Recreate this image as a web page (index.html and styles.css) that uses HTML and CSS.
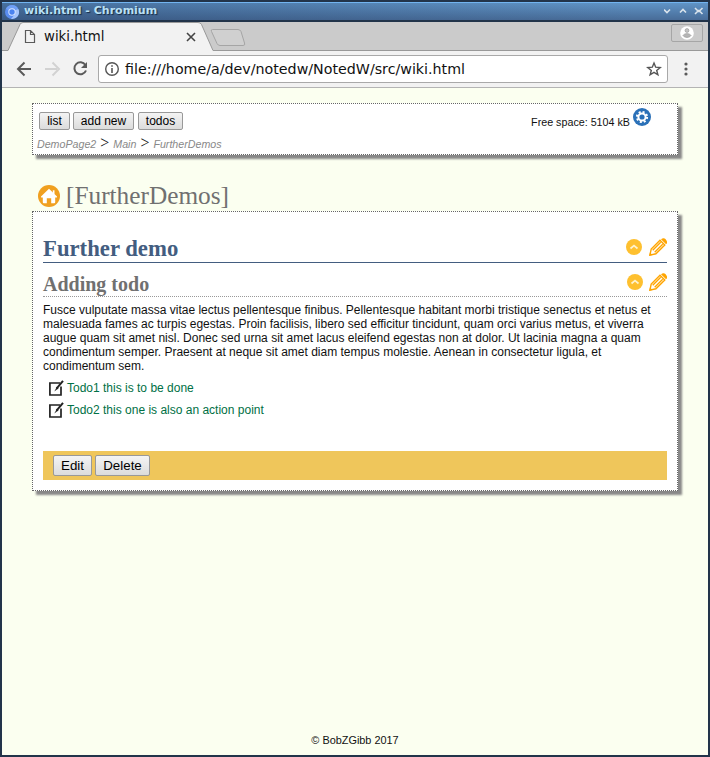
FILE: index.html
```html
<!DOCTYPE html>
<html lang="en">
<head>
<meta charset="utf-8">
<title>wiki.html</title>
<link rel="stylesheet" href="styles.css">
</head>
<body>
<div class="window">
  <header class="titlebar">
    <svg class="logo" width="16" height="16" viewBox="0 0 16 16"><circle cx="8" cy="8" r="7" fill="#5a8df0"/><path d="M8 1a7 7 0 0 1 6.300 4H8a3 3 0 0 0-3 2L2 4.500A7 7 0 0 1 8 1z" fill="#6f9ff5"/><path d="M14.300 5A7 7 0 0 1 7 15l4-5V6z" fill="#a6c5fa"/><circle cx="8" cy="8" r="3.700" fill="#d5e4ff"/><circle cx="8" cy="8" r="2.700" fill="#4b83ee"/></svg>
    <span class="caption">wiki.html - Chromium</span>
    <svg class="controls" width="40" height="10" viewBox="0 0 40 10" fill="none" stroke="#d9e3ec" stroke-width="1.600"><path d="M0 3.500l3 3 3-3M16 6.500l3-3 3 3M31 2l2.500 2.500h2.500l2.500-2.500M31 8l2.500-2.500h2.500l2.500 2.500"/></svg>
  </header>
  <div class="tabs">
    <svg class="tab-shapes" width="706" height="30" viewBox="0 0 706 30"><path d="M0 28.500H6L18 2.500Q19 .5 21 .5H196Q198.500.5 199.500 2.500L211 28.500H706V30H0z" fill="#f2f2f2"/><path d="M0 28.500H6L18 2.500Q19 .5 21 .5H196Q198.500.5 199.500 2.500L211 28.500H706" fill="none" stroke="#999"/><path d="M210.500 7.500H236Q238 7.500 239 9.500L242.500 21Q243.500 23.500 241 23.500H218Q216 23.500 215 21.500L209.500 9.500Q208.500 7.500 210.500 7.500z" fill="#d0d0d0" stroke="#a5a5a5"/></svg>
    <svg class="doc" width="12" height="15" viewBox="0 0 12 15" fill="none" stroke="#5a5a5a" stroke-width="1.200"><path d="M1.500 1.500h5l4 4v8h-9zM6.500 1.500v4h4"/></svg>
    <span class="tab-name">wiki.html</span>
    <svg class="close" width="10" height="10" viewBox="0 0 10 10" stroke="#444" stroke-width="1.600"><path d="M1 1l8 8M9 1l-8 8"/></svg>
    <span class="user"><svg width="14" height="14" viewBox="0 0 14 14"><circle cx="7" cy="7" r="6.800" fill="#fff"/><circle cx="7" cy="4.500" r="1.900" fill="#c5c5c5" stroke="#999" stroke-width=".7"/><path d="M3 9.500C4.500 7 9.500 7 11 9.500 9.500 12 4.500 12 3 9.500z" fill="#b5b5b5" stroke="#999" stroke-width=".7"/></svg></span>
  </div>
  <div class="toolbar">
    <svg width="90" height="24" viewBox="0 0 90 24" fill="none" stroke="#5a5a5a" stroke-width="2"><path d="M29 12H17M22.500 5.500L16 12l6.500 6.500"/><path d="M43 12h12M50.500 5.500L57 12l-6.500 6.500" stroke="#d2d2d2"/><path d="M83.400 8A6 6 0 1 0 84 13.500"/><path d="M85 5v6h-6z" fill="#5a5a5a" stroke="none"/></svg>
    <div class="address">
      <svg width="16" height="16" viewBox="0 0 16 16"><circle cx="8" cy="8" r="6.300" fill="none" stroke="#555" stroke-width="1.400"/><path d="M7.200 7h1.600v5H7.200zM7.200 4.200h1.600v1.600H7.200z" fill="#555"/></svg>
      <span class="url">file:///home/a/dev/notedw/NotedW/src/wiki.html</span>
      <svg width="16" height="16" viewBox="0 0 16 16" fill="none" stroke="#555" stroke-width="1.400"><path d="M8 2l1.700 4.200 4.500.3-3.500 2.900 1.200 4.400L8 11.400l-3.900 2.400 1.200-4.400-3.500-2.900 4.500-.3z"/></svg>
    </div>
    <svg class="menu" width="4" height="16" viewBox="0 0 4 16" fill="#5a5a5a"><circle cx="2" cy="3" r="1.600"/><circle cx="2" cy="8" r="1.600"/><circle cx="2" cy="13" r="1.600"/></svg>
  </div>
  <main class="page">
    <section class="card nav">
      <div class="nav-row">
        <button>list</button><button>add new</button><button>todos</button>
        <span class="space">Free space: 5104 kB</span>
        <svg class="gear" width="18" height="18" viewBox="0 0 18 18"><circle cx="9" cy="9" r="9" fill="#2b71b8"/><circle cx="9" cy="9" r="5.100" fill="none" stroke="#fff" stroke-width="2" stroke-dasharray="2 2.005"/><circle cx="9" cy="9" r="3.600" fill="none" stroke="#fff" stroke-width="2"/></svg>
      </div>
      <div class="crumbs"><a>DemoPage2</a> <b>&gt;</b> <a>Main</a> <b>&gt;</b> <a>FurtherDemos</a></div>
    </section>
    <div class="page-title">
      <svg width="22" height="22" viewBox="0 0 22 22"><circle cx="11" cy="11" r="11" fill="#f0a020"/><path d="M11 3.800l8 7.700q.4 1-.6 1h-1.200v4.800q0 1-1 1h-3v-5H8.800v5h-3q-1 0-1-1v-4.800H3.600q-1 0-.6-1z" fill="#fff"/><path d="M14.800 5.300h1.700v4h-1.700z" fill="#fff"/></svg>
      <span>[FurtherDemos]</span>
    </div>
    <section class="card article">
      <div class="heading first"><h1>Further demo</h1>
        <svg class="up" width="16" height="16" viewBox="0 0 16 16"><circle cx="8" cy="8" r="8" fill="#fec02f"/><path d="M4.500 9.500L8 6.700l3.500 2.800" fill="none" stroke="#fff3ce" stroke-width="1.700"/></svg>
        <svg class="pencil" width="18" height="18" viewBox="0 0 18 18" fill="none" stroke="#ffa500" stroke-width="1.400"><path d="M.9 17.100l1.300-6L11 2.200l4.800 4.800L6.900 15.800zM3.700 12.200l8-8M5.700 14.200l8-8"/><path d="M12 1.200Q13.500 0 15 .2T17.800 3 16.800 6z" fill="#ffa500" stroke="none"/><path d="M.2 17.800l.8-3.400 2.600 2.600z" fill="#ffa500" stroke="none"/></svg></div>
      <div class="heading second"><h2>Adding todo</h2>
        <svg class="up" width="16" height="16" viewBox="0 0 16 16"><circle cx="8" cy="8" r="8" fill="#fec02f"/><path d="M4.500 9.500L8 6.700l3.500 2.800" fill="none" stroke="#fff3ce" stroke-width="1.700"/></svg>
        <svg class="pencil" width="18" height="18" viewBox="0 0 18 18" fill="none" stroke="#ffa500" stroke-width="1.400"><path d="M.9 17.100l1.300-6L11 2.200l4.800 4.800L6.900 15.800zM3.700 12.200l8-8M5.700 14.200l8-8"/><path d="M12 1.200Q13.500 0 15 .2T17.800 3 16.800 6z" fill="#ffa500" stroke="none"/><path d="M.2 17.800l.8-3.400 2.600 2.600z" fill="#ffa500" stroke="none"/></svg></div>
      <p class="text">Fusce vulputate massa vitae lectus pellentesque finibus. Pellentesque habitant morbi tristique senectus et netus et<br>malesuada fames ac turpis egestas. Proin facilisis, libero sed efficitur tincidunt, quam orci varius metus, et viverra<br>augue quam sit amet nisl. Donec sed urna sit amet lacus eleifend egestas non at dolor. Ut lacinia magna a quam<br>condimentum semper. Praesent at neque sit amet diam tempus molestie. Aenean in consectetur ligula, et<br>condimentum sem.</p>
      <ul class="todos">
        <li><svg width="16" height="16" viewBox="0 0 16 16" fill="none" stroke="#222"><path d="M12 3H1.900v12H13V6.500" stroke-width="1.700"/><path d="M15 .8L8.500 8.600" stroke-width="2"/><path d="M8.900 6.800L6.300 11.500l4.300-3.200z" fill="#222" stroke="none"/></svg><span>Todo1 this is to be done</span></li>
        <li><svg width="16" height="16" viewBox="0 0 16 16" fill="none" stroke="#222"><path d="M12 3H1.900v12H13V6.500" stroke-width="1.700"/><path d="M15 .8L8.500 8.600" stroke-width="2"/><path d="M8.900 6.800L6.300 11.500l4.300-3.200z" fill="#222" stroke="none"/></svg><span>Todo2 this one is also an action point</span></li>
      </ul>
      <div class="actions"><button>Edit</button><button>Delete</button></div>
    </section>
    <footer>© BobZGibb 2017</footer>
  </main>
</div>
</body>
</html>
```
FILE: styles.css
```css
* { box-sizing: border-box; }
body { margin: 0; }
svg { display: block; flex: none; }
.window {
  width: 710px; height: 757px;
  border: 2px solid #22344a;
  display: flex; flex-direction: column;
  font-family: "Liberation Sans", Arial, sans-serif;
}
.titlebar {
  height: 18px; flex: none;
  display: flex; align-items: center;
  padding: 0 4px 0 2px;
  border-top: 1px solid #72b4f0;
  background: linear-gradient(90deg, rgba(35,60,100,.4), rgba(35,60,100,0) 90%), linear-gradient(#6094c6, #486c98);
}
.caption {
  font: bold 11px/16px "DejaVu Sans", sans-serif;
  color: #b9e0f6; text-shadow: 1px 1px 1px #172b45;
  margin-left: 4px; flex: 1; padding-bottom: 1px;
}
.controls { margin-bottom: 1px; }
.tabs {
  height: 31px; flex: none; position: relative;
  background: #cbcbcb; border-top: 2px solid #22344a;
  display: flex; align-items: center;
}
.tab-shapes { position: absolute; left: 0; top: 0; }
.doc, .close, .tab-name { position: relative; }
.doc { margin-left: 22px; }
.tab-name { font: 13.300px/20px "DejaVu Sans", sans-serif; margin-left: 8px; width: 142px; color: #111; }
.user {
  margin-left: auto; margin-right: 5px; margin-bottom: 7px; position: relative;
  width: 32px; height: 18px; border: 1px solid #a6a6a6; border-radius: 2px;
  display: flex; align-items: center; justify-content: center;
}
.toolbar {
  height: 37px; flex: none; background: #f2f2f2;
  border-bottom: 1px solid #b4b4b4;
  display: flex; align-items: center;
}
.address {
  width: 570px; height: 28px; margin-left: 6px;
  background: #fff; border: 1px solid #a9a9a9; border-radius: 3px;
  display: flex; align-items: center; padding: 0 5px;
}
.url { font: 14.240px/20px "DejaVu Sans", sans-serif; margin-left: 5px; flex: 1; color: #111; }
.menu { margin-left: 16px; }
.page {
  flex: 1; background: #fbfff0; padding: 15px 30px 8px;
  display: flex; flex-direction: column;
}
.card { background: #fff; border: 1px dotted #666; box-shadow: 4px 4px 2px 0 #888; }
.nav { height: 52px; width: 646px; padding: 4px 26px 0 4px; }
.nav-row { height: 26px; display: flex; align-items: center; padding-left: 2px; }
button {
  font-family: inherit; color: #000; border: 1px solid #999; border-radius: 2px;
  background: linear-gradient(#f4f4f4, #dcdcdc); padding: 0;
}
.nav button { width: 31px; height: 18px; font-size: 12px; line-height: 16px; margin-right: 3px; }
.nav button:nth-child(2) { width: 61px; margin-right: 4px; }
.nav button:nth-child(3) { width: 45px; }
.space { margin-left: auto; font-size: 10.720px; color: #111; padding-top: 2px; }
.gear { margin: 0 0 8px 3px; }
.crumbs { font: 16px/18px "Liberation Serif", serif; color: #111; white-space: pre; }
.crumbs b { font-weight: normal; }
.crumbs a { font: italic 10.670px/18px "Liberation Sans", sans-serif; color: #888; }
.page-title {
  height: 56px; padding: 25px 0 0 6px;
  display: flex; align-items: center; gap: 6px;
  font: 25.300px/30px "Liberation Serif", serif; color: #707070;
}
.page-title span { padding-bottom: 2px; }
.article { width: 646px; height: 280px; padding: 0 10px; }
.heading { display: flex; align-items: flex-end; }
h1, h2 { margin: 0 auto 0 0; font-family: "Liberation Serif", serif; }
.first { height: 51px; border-bottom: 1px solid #435d80; }
.first h1 { font-size: 22.720px; line-height: 27px; color: #435d80; }
.second { height: 34px; border-bottom: 1px dotted #999; }
.second h2 { font-size: 20px; line-height: 24px; color: #707070; }
.up { margin: 0 7px 7px 0; }
.pencil { margin-bottom: 6px; }
.second .up { margin: 0 6px 6px 0; }
.second .pencil { margin-bottom: 5px; }
.text { margin: 6px 0 7px; font-size: 12px; line-height: 14px; color: #111; white-space: nowrap; }
.todos { list-style: none; margin: 0; padding: 0 0 0 5px; }
.todos li { height: 22px; display: flex; align-items: flex-start; font-size: 12px; line-height: 16px; color: #007045; }
.todos span { margin-left: 3px; }
.actions {
  height: 29px; margin-top: 27px; padding-left: 10px;
  background: #efc65b; display: flex; align-items: center; gap: 3px;
}
.actions button { width: 39px; height: 21px; font-size: 13.330px; line-height: 19px; }
.actions button:last-child { width: 55px; }
footer { margin-top: auto; text-align: center; font-size: 10.900px; line-height: 13px; color: #111; }
```
